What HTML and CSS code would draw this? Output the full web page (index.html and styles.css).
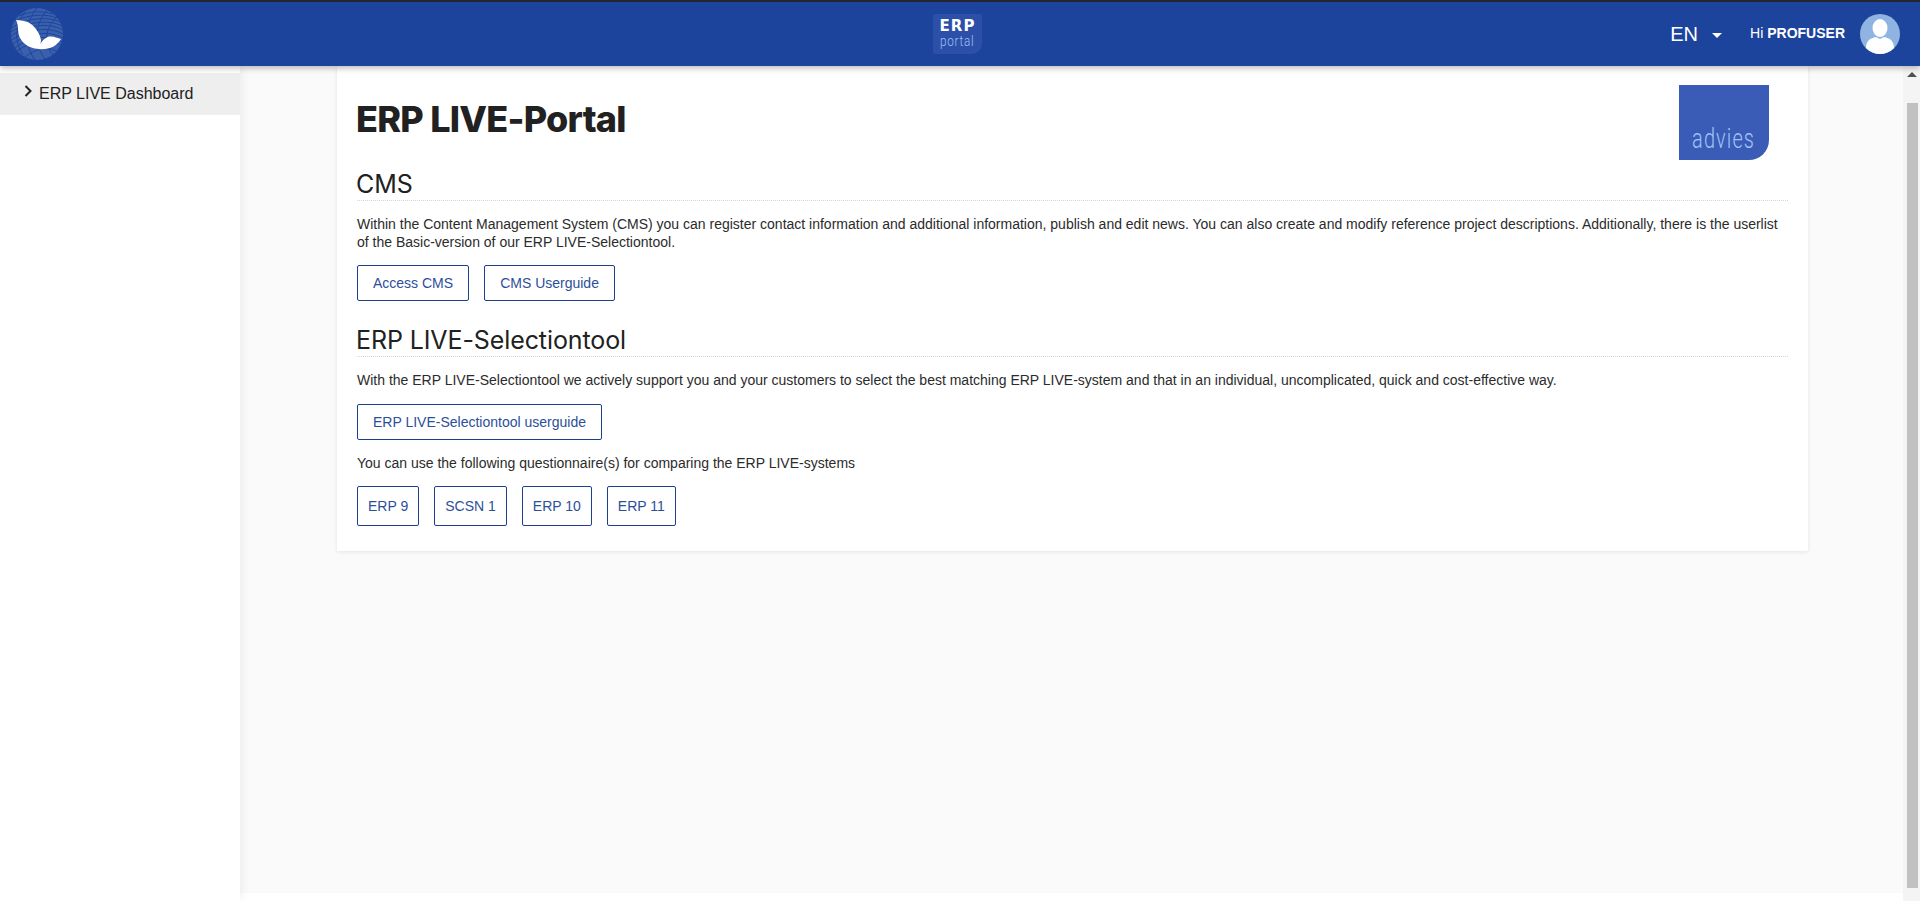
FILE: index.html
```html
<!DOCTYPE html>
<html lang="en">
<head>
<meta charset="utf-8">
<title>ERP LIVE-Portal</title>
<link rel="stylesheet" href="styles.css">
</head>
<body>
<header class="topbar">
  <div class="brand">
    <svg class="globe" viewBox="0 0 52 52" width="52" height="52" aria-hidden="true">
      <circle cx="26" cy="26" r="26" fill="#3a60ad"/>
      <g fill="none" stroke="#1d459c" stroke-width="1">
        <path d="M1 20C14 10 36 8 50 14"/>
        <path d="M0 24C14 14 38 11 51 18"/>
        <path d="M0 28C14 17 38 14 52 22"/>
        <path d="M1 32C16 21 38 18 52 26"/>
        <path d="M2 36C16 25 38 22 52 30"/>
        <path d="M4 40C18 29 38 26 51 34"/>
        <path d="M6 43C20 33 38 30 50 37"/>
        <path d="M14 49C24 41 36 38 45 43"/>
        <path d="M8 8C16 4 30 2 42 6"/>
        <path d="M4 13C16 7 34 5 46 10"/>
        <path d="M26 0C14 14 12 36 24 52"/>
        <path d="M36 2C24 16 22 36 34 51"/>
        <path d="M46 9C34 20 32 36 42 47"/>
        <path d="M14 4C4 16 3 34 12 47"/>
      </g>
      <path d="M5 12C10 12 16 13 20 16C25 20 29 26 30 32L29 41C20 41 13 37 9 30C6 24 8 17 5 12Z" fill="#fff"/>
      <path d="M50 31C45 39 38 42 27 41C29 35 33 30 38 28.500C43 28 46 30 50 31Z" fill="#fff"/>
    </svg>
  </div>
  <div class="portal-logo">
    <span class="portal-erp">ERP</span>
    <span class="portal-word">portal</span>
  </div>
  <div class="userbar">
    <span class="lang">EN<i class="caret"></i></span>
    <span class="greeting">Hi <b>PROFUSER</b></span>
    <svg class="avatar" viewBox="0 0 40 40" width="40" height="40" aria-hidden="true">
      <circle cx="20" cy="20" r="20" fill="#8fb4e2"/>
      <ellipse cx="20" cy="14" rx="7.5" ry="9" fill="#fff"/>
      <path d="M6 34C6 27 10 24 16 23L20 25L24 23C30 24 34 27 34 34C30 38 25 40 20 40C15 40 10 38 6 34Z" fill="#fff"/>
    </svg>
  </div>
</header>
<div class="body-row">
  <nav class="sidebar">
    <a class="side-item">
      <svg class="chev" viewBox="0 0 8 12" width="8" height="12" aria-hidden="true"><path d="M1.500 1L6.500 6L1.500 11" fill="none" stroke="#222" stroke-width="2"/></svg>
      <span>ERP LIVE Dashboard</span>
    </a>
  </nav>
  <main class="main">
    <div class="content">
      <section class="card">
        <div class="title-row">
          <h1>ERP LIVE-Portal</h1>
          <div class="advies"><span>advies</span></div>
        </div>
        <h2 class="h-cms">CMS</h2>
        <p class="p-cms">Within the Content Management System (CMS) you can register contact information and additional information, publish and edit news. You can also create and modify reference project descriptions. Additionally, there is the userlist of the Basic-version of our ERP LIVE-Selectiontool.</p>
        <div class="btn-row row-cms">
          <a class="btn">Access CMS</a>
          <a class="btn">CMS Userguide</a>
        </div>
        <h2 class="h-tool">ERP LIVE-Selectiontool</h2>
        <p class="p-tool">With the ERP LIVE-Selectiontool we actively support you and your customers to select the best matching ERP LIVE-system and that in an individual, uncomplicated, quick and cost-effective way.</p>
        <div class="btn-row row-guide">
          <a class="btn">ERP LIVE-Selectiontool userguide</a>
        </div>
        <p class="p-q">You can use the following questionnaire(s) for comparing the ERP LIVE-systems</p>
        <div class="btn-row row-q">
          <a class="btn btn-sm">ERP 9</a>
          <a class="btn btn-sm">SCSN 1</a>
          <a class="btn btn-sm">ERP 10</a>
          <a class="btn btn-sm">ERP 11</a>
        </div>
      </section>
    </div>
    <div class="foot"></div>
  </main>
  <div class="scrollbar">
    <i class="arrow-up"></i>
    <i class="thumb"></i>
  </div>
</div>
</body>
</html>
```
FILE: styles.css
```css
* { box-sizing: border-box; }
html, body { height: 100%; }
body {
  margin: 0;
  height: 901px;
  overflow: hidden;
  display: flex;
  flex-direction: column;
  font-family: "Liberation Sans", Arial, sans-serif;
  font-size: 14px;
  line-height: 18px;
  color: #2b2b2b;
  background: #fafafa;
}
.topbar {
  flex: 0 0 66px;
  height: 66px;
  border-top: 2px solid #23262e;
  background: #1c449c;
  box-shadow: 0 2px 6px rgba(0,0,0,.28);
  display: grid;
  grid-template-columns: 1fr auto 1fr;
  align-items: center;
  position: relative;
  z-index: 2;
}
.brand { padding-left: 11px; display: flex; align-items: center; }
.globe { display: block; }
.portal-logo {
  width: 49px;
  height: 40px;
  margin-right: 5px;
  background: #2c50a8;
  border-radius: 2px 2px 10px 2px;
  display: flex;
  flex-direction: column;
  align-items: center;
  padding-top: 4px;
}
.portal-erp {
  color: #fff;
  font: 700 15px/16px "DejaVu Sans", sans-serif;
  letter-spacing: 1px;
}
.portal-word {
  color: #9cc0f4;
  font: 300 15px/15px "Roboto", sans-serif;
  letter-spacing: 1px;
  transform: scaleX(.78);
}
.userbar {
  display: flex;
  align-items: center;
  justify-content: flex-end;
  padding-right: 20px;
}
.lang {
  color: #fff;
  font-size: 20px;
  display: flex;
  align-items: center;
  margin-right: 28px;
}
.caret {
  margin-left: 14px;
  margin-top: 2px;
  border: 5px solid transparent;
  border-top-color: #fff;
  border-bottom-width: 0;
}
.greeting { color: #fff; font-size: 14px; margin-right: 15px; margin-bottom: 2px; }
.avatar { display: block; }
.body-row { flex: 1; display: flex; min-height: 0; }
.sidebar {
  flex: 0 0 240px;
  background: #fff;
  padding-top: 7px;
  box-shadow: 2px 0 8px rgba(0,0,0,.06);
  position: relative;
  z-index: 1;
}
.side-item {
  height: 42px;
  background: #eee;
  display: flex;
  align-items: center;
  font-size: 16px;
  padding-left: 24px;
  color: #212121;
}
.chev { margin-right: 7px; margin-top: -6px; }
.main { flex: 1; display: flex; flex-direction: column; min-width: 0; }
.content { flex: 1; padding: 0 95px 0 97px; }
.foot { flex: 0 0 8px; background: #fff; }
.card {
  background: #fff;
  box-shadow: 0 1px 4px rgba(0,0,0,.09);
  height: 485px;
  padding: 19px 20px 0;
}
.title-row { display: flex; justify-content: space-between; align-items: flex-start; height: 75px; }
h1 {
  margin: 12px 0 0 -1px;
  font: 800 36px/44px "Inter", sans-serif;
  letter-spacing: -.75px;
  color: #212121;
}
.advies {
  width: 90px;
  height: 75px;
  margin-right: 19px;
  background: #3a5cb6;
  border-bottom-right-radius: 20px;
  display: flex;
  align-items: flex-end;
  justify-content: center;
  padding-bottom: 7px;
}
.advies span {
  color: #a0c2f6;
  font: 300 27px/28px "Roboto", sans-serif;
  letter-spacing: 1.5px;
  transform: scaleX(.74);
}
h2 {
  margin: 0;
  height: 32px;
  font: 400 25px/30px "Inter", sans-serif;
  letter-spacing: -.1px;
  text-indent: -1px;
  color: #212121;
  border-bottom: 1px dotted #d4d4d4;
}
.h-cms { margin-top: 9px; }
p { margin: 0; }
.p-cms { margin-top: 14px; }
.btn-row { display: flex; gap: 15px; }
.btn {
  height: 36px;
  padding: 0 15px;
  display: flex;
  align-items: center;
  border: 1px solid #1c3f8f;
  border-radius: 2px;
  color: #2c4f9a;
  font-size: 14px;
}
.btn-sm { height: 40px; padding: 0 10px; }
.row-cms { margin-top: 14px; }
.h-tool { margin-top: 24px; }
.p-tool { margin-top: 14px; }
.row-guide { margin-top: 15px; }
.p-q { margin-top: 14px; }
.row-q { margin-top: 14px; }
.scrollbar {
  flex: 0 0 17px;
  background: #f4f4f4;
  display: flex;
  flex-direction: column;
  align-items: center;
  padding: 6px 0 13px 4px;
}
.arrow-up {
  border: 5px solid transparent;
  border-bottom: 5px solid #505050;
  border-top-width: 0;
  margin-right: 3px;
}
.thumb { margin-top: 26px; width: 11px; flex: 1; background: #c1c1c1; margin-right: 2px; }
```
